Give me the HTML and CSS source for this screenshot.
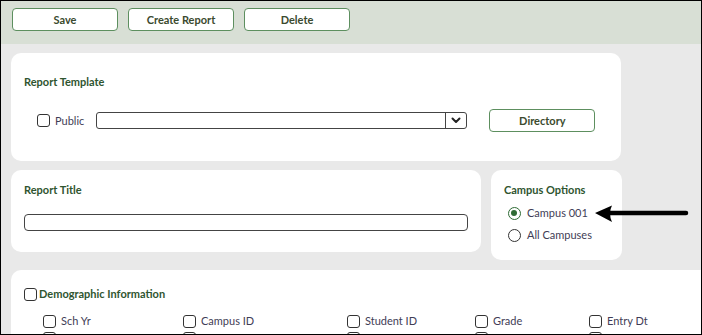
FILE: index.html
```html
<!DOCTYPE html>
<html>
<head>
<meta charset="utf-8">
<link rel="stylesheet" href="styles.css">
</head>
<body>
<div class="frame">
  <div class="toolbar">
    <button class="btn">Save</button>
    <button class="btn">Create Report</button>
    <button class="btn">Delete</button>
  </div>
  <div class="main">
    <section class="card card-template">
      <h2 class="card-title">Report Template</h2>
      <div class="template-row">
        <label class="check"><span class="box"></span><span class="lbl">Public</span></label>
        <div class="select"><span class="select-field"></span><span class="select-arrow"><svg width="10" height="7" viewBox="0 0 10 7"><path d="M1.5 1.5 L5 5 L8.5 1.5" fill="none" stroke="#222" stroke-width="2" stroke-linecap="round" stroke-linejoin="round"/></svg></span></div>
        <button class="btn btn-dir">Directory</button>
      </div>
    </section>
    <div class="row2">
      <section class="card card-title-box">
        <h2 class="card-title">Report Title</h2>
        <div class="text-input"></div>
      </section>
      <section class="card card-campus">
        <h2 class="card-title">Campus Options</h2>
        <label class="radio"><span class="circle checked"></span><span class="lbl">Campus 001</span></label>
        <label class="radio"><span class="circle"></span><span class="lbl">All Campuses</span></label>
      </section>
    </div>
    <section class="card card-demo">
      <label class="check check-head"><span class="box"></span><span class="demo-title">Demographic Information</span></label>
      <div class="demo-grid">
        <label class="check"><span class="box"></span><span class="lbl">Sch Yr</span></label>
        <label class="check"><span class="box"></span><span class="lbl">Campus ID</span></label>
        <label class="check"><span class="box"></span><span class="lbl">Student ID</span></label>
        <label class="check"><span class="box"></span><span class="lbl">Grade</span></label>
        <label class="check"><span class="box"></span><span class="lbl">Entry Dt</span></label>
        <label class="check"><span class="box"></span><span class="lbl">&nbsp;</span></label>
        <label class="check"><span class="box"></span><span class="lbl">&nbsp;</span></label>
        <label class="check"><span class="box"></span><span class="lbl">&nbsp;</span></label>
        <label class="check"><span class="box"></span><span class="lbl">&nbsp;</span></label>
        <label class="check"><span class="box"></span><span class="lbl">&nbsp;</span></label>
      </div>
    </section>
  </div>
  <svg class="pointer" width="96" height="20" viewBox="0 0 96 20">
    <path d="M0 8 L17 0.5 Q13 8 17 17 Z" fill="#000"/>
    <line x1="12" y1="8" x2="91" y2="8" stroke="#000" stroke-width="4.5" stroke-linecap="round"/>
  </svg>
</div>
</body>
</html>
```

FILE: styles.css
```css
* { box-sizing: border-box; }
html, body { margin: 0; padding: 0; }
body {
  width: 702px;
  height: 335px;
  overflow: hidden;
  font-family: Lato, "Open Sans", sans-serif;
  font-size: 11px;
}
.frame {
  position: relative;
  width: 702px;
  height: 335px;
  border: 1px solid #000;
  background: #e9e9e9;
  overflow: hidden;
}
.toolbar {
  height: 43px;
  background: #d8dfd5;
  display: flex;
  gap: 10px;
  padding: 7px 0 0 11px;
}
.btn {
  width: 106px;
  height: 23px;
  background: #fff;
  border: 1.5px solid #5d8f5f;
  border-radius: 4px;
  font-family: Lato, "Open Sans", sans-serif;
  font-size: 11px;
  font-weight: 700;
  color: #3b4a2e;
  padding: 0;
}
.main {
  padding: 9px 0 0 10px;
  display: flex;
  flex-direction: column;
  gap: 9px;
}
.card {
  background: #fff;
  border-radius: 10px;
}
.card-title {
  margin: 0;
  font-size: 11px;
  font-weight: 700;
  color: #2f5530;
  line-height: 14px;
}
.card-template {
  width: 610px;
  height: 108px;
  padding: 22px 0 0 13px;
}
.template-row {
  display: flex;
  align-items: center;
  margin-top: 20px;
  padding-left: 13px;
}
.check {
  display: flex;
  align-items: center;
  gap: 5px;
}
.box {
  width: 13px;
  height: 13px;
  border: 1.5px solid #333;
  border-radius: 3px;
  background: #fff;
  flex: none;
}
.lbl {
  color: #3f3d56;
  font-size: 11px;
  line-height: 14px;
}
.select {
  margin-left: 12px;
  width: 371px;
  height: 17px;
  border: 1.5px solid #444;
  border-radius: 3px;
  display: flex;
}
.select-field { flex: 1; }
.select-arrow {
  width: 21px;
  border-left: 1.5px solid #444;
  display: flex;
  align-items: center;
  justify-content: center;
}
.btn-dir { margin-left: 22px; }
.row2 {
  display: flex;
  gap: 10px;
  align-items: flex-start;
}
.card-title-box {
  width: 470px;
  height: 82px;
  padding: 13px 13px 0 13px;
}
.text-input {
  margin-top: 17px;
  width: 444px;
  height: 17px;
  border: 1.5px solid #444;
  border-radius: 4px;
}
.card-campus {
  width: 131px;
  height: 90px;
  padding: 13px 0 0 13px;
  display: flex;
  flex-direction: column;
}
.card-campus .card-title { margin-bottom: 5px; }
.radio {
  display: flex;
  align-items: center;
  gap: 6px;
  height: 22px;
  padding-left: 4px;
}
.circle {
  width: 13px;
  height: 13px;
  border: 1.5px solid #333;
  border-radius: 50%;
  background: #fff;
  flex: none;
  position: relative;
}
.circle.checked { border-color: #2e6b34; }
.circle.checked::after {
  content: "";
  position: absolute;
  left: 2px; top: 2px;
  width: 6px; height: 6px;
  border-radius: 50%;
  background: #2e6b34;
}
.card-demo {
  margin-top: 1px;
  height: 80px;
  border-radius: 10px 0 0 0;
  padding: 17px 0 0 13px;
}
.check-head { gap: 2px; }
.demo-title {
  font-weight: 700;
  color: #2f5530;
  line-height: 14px;
}
.demo-grid {
  display: grid;
  grid-template-columns: 140px 164px 128px 114px auto;
  row-gap: 3px;
  margin-top: 13px;
  padding-left: 19px;
}
.pointer {
  position: absolute;
  left: 594px;
  top: 204px;
}
```
